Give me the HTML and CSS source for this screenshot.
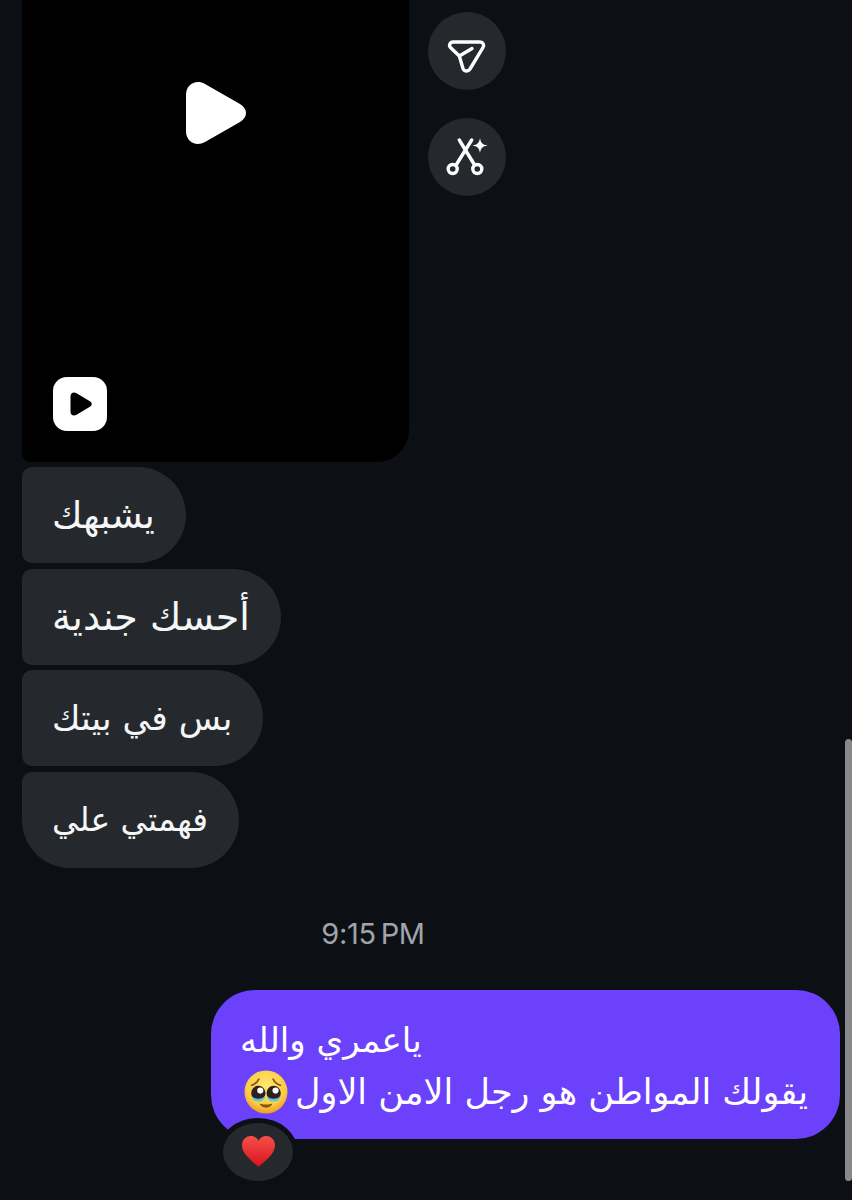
FILE: index.html
```html
<!DOCTYPE html>
<html lang="ar">
<head>
<meta charset="utf-8">
<title>Chat</title>
<link rel="stylesheet" href="styles.css">
</head>
<body>
<main class="chat">
  <div class="media-row">
    <div class="video">
      <svg class="play-big" viewBox="0 0 60 64" width="60" height="64"><path d="M0 14C0 3 10 -2 19 3L54 23C62 28 62 36 54 41L19 61C10 66 0 61 0 50Z" fill="#fff"/></svg>
      <div class="video-badge">
        <svg viewBox="0 0 24 24" width="24" height="24"><path d="M2.500 4.500C2.500 1 5.500 -.5 8.500 1.200L21.500 9C24.500 10.800 24.500 13.200 21.500 15L8.500 22.800C5.500 24.500 2.500 23 2.500 19.500Z" fill="#000"/></svg>
      </div>
    </div>
    <div class="actions">
      <button class="action">
        <svg viewBox="0 0 48 48" width="48" height="48" fill="none" stroke="#fff" stroke-width="3.400" stroke-linejoin="round" stroke-linecap="round"><path d="M10 15H37C40 15 41.500 18 40 20.500L27 42C25 45 21 44.500 20 41.500L16.300 29L7.500 20.500C5.500 18.500 7 15 10 15Z"/><path d="M16.300 29L29 21.500"/></svg>
      </button>
      <button class="action">
        <svg viewBox="0 0 48 48" width="48" height="48" fill="none" stroke="#fff" stroke-width="3.400" stroke-linecap="round"><path d="M16.300 7L31 31"/><path d="M28.700 7L13.700 31"/><circle cx="9.700" cy="36" r="4.500"/><circle cx="34.300" cy="36" r="4.500"/><path d="M37 5C37.900 10 39.300 11.600 44.500 12.500C39.300 13.400 37.900 15 37 20C36.100 15 34.700 13.400 29.500 12.500C34.700 11.600 36.100 10 37 5Z" fill="#fff" stroke="none"/></svg>
      </button>
    </div>
  </div>

  <div class="incoming">
    <div class="bubble size-a"><span>يشبهك</span></div>
    <div class="bubble size-d"><span>أحسك جندية</span></div>
    <div class="bubble size-b"><span>بس في بيتك</span></div>
    <div class="bubble size-c"><span>فهمتي علي</span></div>
  </div>

  <div class="time">9:15 PM</div>

  <div class="outgoing">
    <div class="sent">
      <div class="sent-line first">ياعمري والله</div>
      <div class="sent-line"><span>يقولك المواطن هو رجل الامن الاول</span>
        <svg class="pleading" viewBox="0 0 46 46" width="44" height="44">
          <defs><radialGradient id="face" cx="50%" cy="35%" r="65%"><stop offset="0" stop-color="#fee96e"/><stop offset=".72" stop-color="#fccb40"/><stop offset="1" stop-color="#ef9c28"/></radialGradient></defs>
          <circle cx="23" cy="23" r="22.500" fill="url(#face)"/>
          <path d="M8 16C11 15 14 13 15.500 9.500M38 16C35 15 32 13 30.500 9.500" fill="none" stroke="#8a5316" stroke-width="1.800" stroke-linecap="round"/>
          <circle cx="15" cy="24" r="7.500" fill="#2c211d"/><circle cx="31" cy="24" r="7.500" fill="#2c211d"/>
          <circle cx="17" cy="21.500" r="3.200" fill="#fff"/><circle cx="33" cy="21.500" r="3.200" fill="#fff"/>
          <path d="M8 27C10 31 20 31 22 27C22 31 19 33 15 33C11 33 8 31 8 27ZM24 27C26 31 36 31 38 27C38 31 35 33 31 33C27 33 24 31 24 27Z" fill="#5cc6e8"/>
          <path d="M17.500 36C20.500 39.500 25.500 39.500 28.500 36C25.500 37 20.500 37 17.500 36Z" fill="#8a5316" stroke="#8a5316" stroke-width="1.500" stroke-linejoin="round"/>
        </svg>
      </div>
      <div class="reaction">
        <svg viewBox="0 0 36 34" width="35" height="33"><defs><linearGradient id="heart" x1="0" y1="0" x2="0" y2="1"><stop offset="0" stop-color="#f7504a"/><stop offset="1" stop-color="#d5121e"/></linearGradient></defs><path d="M18 33C12 27 1 20 1 10.500C1 4.500 5.500 1 10 1C13.500 1 16.500 3 18 6C19.500 3 22.500 1 26 1C30.500 1 35 4.500 35 10.500C35 20 24 27 18 33Z" fill="url(#heart)"/></svg>
      </div>
    </div>
  </div>
</main>
<div class="scrollbar"></div>
</body>
</html>
```
FILE: styles.css
```css
html, body { margin: 0; height: 1200px; overflow: hidden; background: #0c1014; }
body { position: relative; font-family: "DejaVu Sans", "Noto Sans", sans-serif; color: #f5f6f7; }
.chat { display: flex; flex-direction: column; padding-left: 22px; padding-right: 12px; }
.media-row { display: flex; gap: 19px; }
.video { width: 387px; height: 462px; background: #000; border-radius: 0 0 32px 8px; display: flex; flex-direction: column; align-items: center; position: relative; }
.play-big { margin-top: 81px; }
.video-badge { position: absolute; left: 31px; bottom: 31px; width: 54px; height: 54px; background: #fff; border-radius: 14px; display: flex; align-items: center; justify-content: center; }
.actions { display: flex; flex-direction: column; gap: 28px; padding-top: 12px; }
.action { width: 78px; height: 78px; border-radius: 50%; border: 0; padding: 0; background: #25292e; display: flex; align-items: center; justify-content: center; }
.incoming { display: flex; flex-direction: column; align-items: flex-start; gap: 5.600px; margin-top: 5px; }
.bubble { height: 96px; box-sizing: border-box; padding: 0 31px 0 30px; display: flex; align-items: center; background: #25292e; border-radius: 10px 48px 48px 10px; direction: rtl; }
.size-a { font-size: 37px; }
.size-b { font-size: 34.500px; }
.size-c { font-size: 33px; }
.size-d { font-size: 38px; }
.bubble:last-child { border-radius: 10px 48px 48px 48px; }
.time { text-align: center; margin: 50px 0 0 -116px; height: 32px; line-height: 32px; font-family: "Inter", sans-serif; font-size: 29px; letter-spacing: -0.300px; word-spacing: -3px; color: #a0a4ab; }
.outgoing { display: flex; justify-content: flex-end; margin-top: 40px; }
.sent { position: relative; width: 629px; height: 149px; box-sizing: border-box; padding: 24px 32px 0 29px; background: #6b41fb; border-radius: 44px; direction: rtl; font-size: 35px; color: #fff; }
.sent-line { height: 52px; display: flex; align-items: center; gap: 7px; white-space: nowrap; }
.sent-line.first { justify-content: flex-end; font-size: 34px; }
.pleading { flex: none; }
.reaction { position: absolute; left: 7px; top: 128px; width: 80px; height: 68px; box-sizing: border-box; background: #25292e; border: 5px solid #0c1014; border-radius: 50%; display: flex; align-items: center; justify-content: center; }
.scrollbar { position: absolute; left: 845px; top: 739px; width: 7px; height: 442px; border-radius: 4px; background: #86888b; }
```
